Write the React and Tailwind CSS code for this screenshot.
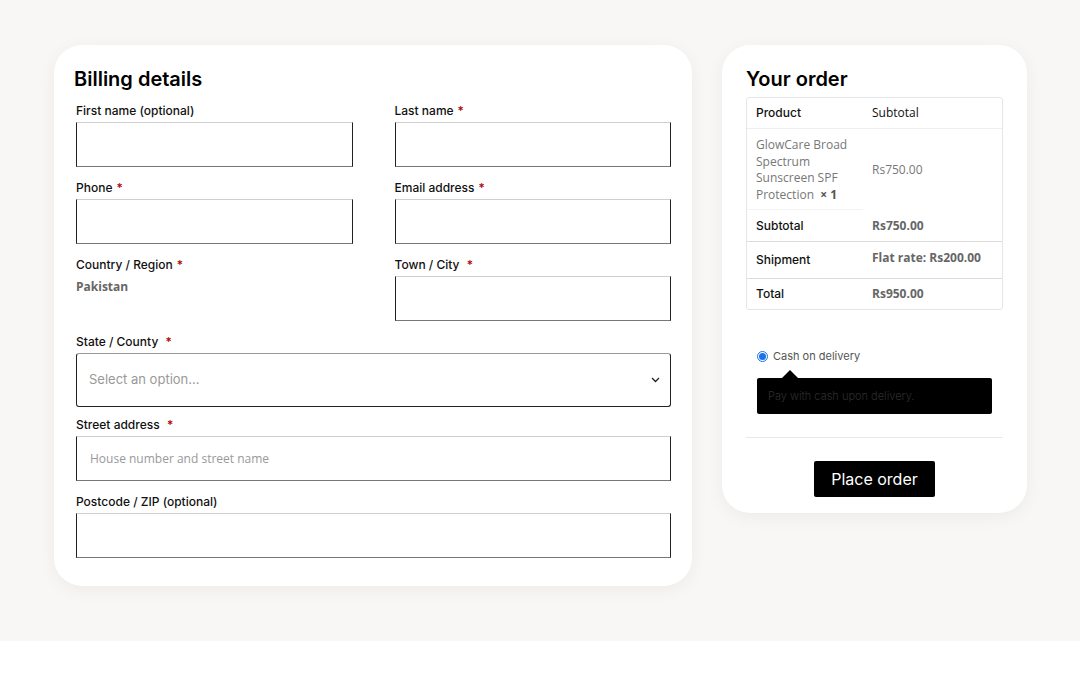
import React from 'react';

const sans = { fontFamily: 'Inter, "Noto Sans", sans-serif' };
const open = { fontFamily: '"Open Sans", "Noto Sans", sans-serif' };

const Req = () => <span className="text-[#a00] ml-1">*</span>;

const Field = ({ label, required, className = '', children }) => (
    <div className={className}>
        <label className="block text-[12px] leading-[18px] font-medium text-[#111]" style={sans}>
            {label}
            {required && <Req />}
        </label>
        <div className="mt-0.5">{children}</div>
    </div>
);

const TextBox = ({ placeholder }) => (
    <input
        className="block w-full h-[45px] bg-white border border-x-[#222] border-t-[#cfcfcf] border-b-[#777] px-[13px] text-[12px] outline-none placeholder:text-[#999]"
        style={open}
        placeholder={placeholder}
    />
);

const OrderRow = ({ label, value, className = '', valueClass = '' }) => (
    <div className={`flex ${className}`}>
        <div className="w-[116px] pl-[9px] flex items-center text-[12px] font-medium text-[#111]" style={sans}>{label}</div>
        <div className={`flex-1 pl-[9px] text-[12px] font-bold text-[#666] ${valueClass}`} style={open}>{value}</div>
    </div>
);

const App = () => {
    return (
        <div className="w-[1080px] h-[675px] bg-white">
            <div className="h-[641px] bg-[#f8f7f5] pt-[45px] pl-[54px] flex items-start gap-[30px]">
                {/* Billing */}
                <div className="w-[638px] bg-white rounded-[28px] shadow-[0_4px_18px_rgba(0,0,0,0.05)] pl-[22px] pr-[21px] pt-5 pb-[28px]">
                    <h2 className="text-[20px] leading-[28px] font-semibold text-black -ml-0.5" style={sans}>Billing details</h2>
                    <div className="mt-[9px] grid grid-cols-2 gap-x-[42px] gap-y-3">
                        <Field label="First name (optional)"><TextBox /></Field>
                        <Field label="Last name" required><TextBox /></Field>
                        <Field label="Phone" required><TextBox /></Field>
                        <Field label="Email address" required><TextBox /></Field>
                        <Field label="Country / Region" required>
                            <p className="pt-[2px] text-[12px] font-bold text-[#666]" style={open}>Pakistan</p>
                        </Field>
                        <Field label={<>Town / City <span className="text-[#a00] ml-1">*</span></>}><TextBox /></Field>
                    </div>
                    <Field label={<>State / County <span className="text-[#a00] ml-1">*</span></>} className="mt-3">
                        <div className="h-[54px] border border-[#222] border-t-[#999] rounded-[3px] flex items-center justify-between pl-[12px] pr-[10px]">
                            <span className="text-[13px] text-[#999]" style={sans}>Select an option...</span>
                            <svg width="9" height="6" viewBox="0 0 9 6" fill="none" stroke="#222" strokeWidth="1.3">
                                <path d="M1 1l3.5 3.5L8 1" />
                            </svg>
                        </div>
                    </Field>
                    <Field label={<>Street address <span className="text-[#a00] ml-1">*</span></>} className="mt-[9px]">
                        <TextBox placeholder="House number and street name" />
                    </Field>
                    <Field label="Postcode / ZIP (optional)" className="mt-3">
                        <TextBox />
                    </Field>
                </div>

                {/* Order */}
                <div className="w-[305px] bg-white rounded-[28px] shadow-[0_4px_18px_rgba(0,0,0,0.05)] px-6 pt-5 pb-4">
                    <h2 className="text-[20px] leading-[28px] font-semibold text-black" style={sans}>Your order</h2>
                    <div className="mt-1 border border-[#e6e6e6] rounded-[3px]">
                        <OrderRow label="Product" value="Subtotal" className="h-[31px] border-b border-[#eee]"
                            valueClass="flex items-center !font-medium !text-[#111]" />
                        <div className="flex h-[81px]">
                            <div className="w-[116px] pl-[9px] pt-[8px] border-b border-[#f3f3f3] text-[12px] leading-[16.6px] text-[#777]" style={open}>
                                GlowCare Broad Spectrum Sunscreen SPF{' '}
                                <span className="whitespace-nowrap">Protection&nbsp;&nbsp;<b className="text-[#555]">×&nbsp;1</b></span>
                            </div>
                            <div className="flex-1 pl-[9px] flex items-center text-[12px] text-[#777]" style={open}>Rs750.00</div>
                        </div>
                        <OrderRow label="Subtotal" value="Rs750.00" className="h-[32px] border-b border-[#ddd]" valueClass="flex items-center" />
                        <OrderRow label="Shipment" value="Flat rate: Rs200.00" className="h-[37px] border-b border-[#ddd]" valueClass="pt-[7px]" />
                        <OrderRow label="Total" value="Rs950.00" className="h-[30px]" valueClass="flex items-center" />
                    </div>

                    <div className="mt-[38px] px-[11px]">
                        <label className="flex items-center gap-[5px]">
                            <span className="w-[11px] h-[11px] rounded-full border border-[#1a73e8] flex items-center justify-center">
                                <span className="w-[7px] h-[7px] rounded-full bg-[#1a73e8]" />
                            </span>
                            <span className="text-[11px] leading-[16px] text-[#555]" style={sans}>Cash on delivery</span>
                        </label>
                        <div className="relative mt-[14px] h-[36px] bg-black rounded-[2px] flex items-center pl-[11px]">
                            <span className="absolute -top-[8px] left-[25px] w-0 h-0 border-x-[8px] border-x-transparent border-b-[8px] border-b-black" />
                            <span className="text-[11px] font-light text-[#2e2e2e]" style={sans}>Pay with cash upon delivery.</span>
                        </div>
                    </div>

                    <div className="mt-[23px] border-t border-[#e8e8e8]" />

                    <div className="mt-[23px] flex justify-center">
                        <button className="w-[121px] h-[36px] bg-black text-white text-[16px] rounded-[2px]" style={sans}>Place order</button>
                    </div>
                </div>
            </div>
        </div>
    );
};

export default App;
